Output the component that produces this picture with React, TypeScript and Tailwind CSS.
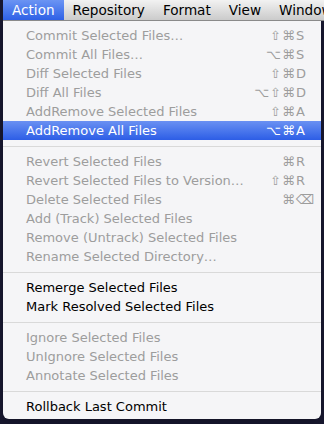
import React from "react";

type Item = {
  label: string;
  mods?: string;
  keyChar?: string;
  enabled?: boolean;
  selected?: boolean;
};

const groups: Item[][] = [
  [
    { label: "Commit Selected Files…", mods: "⇧⌘", keyChar: "S" },
    { label: "Commit All Files…", mods: "⌥⌘", keyChar: "S" },
    { label: "Diff Selected Files", mods: "⇧⌘", keyChar: "D" },
    { label: "Diff All Files", mods: "⌥⇧⌘", keyChar: "D" },
    { label: "AddRemove Selected Files", mods: "⇧⌘", keyChar: "A" },
    { label: "AddRemove All Files", mods: "⌥⌘", keyChar: "A", enabled: true, selected: true },
  ],
  [
    { label: "Revert Selected Files", mods: "⌘", keyChar: "R" },
    { label: "Revert Selected Files to Version…", mods: "⇧⌘", keyChar: "R" },
    { label: "Delete Selected Files", mods: "⌘", keyChar: "⌫" },
    { label: "Add (Track) Selected Files" },
    { label: "Remove (Untrack) Selected Files" },
    { label: "Rename Selected Directory…" },
  ],
  [
    { label: "Remerge Selected Files", enabled: true },
    { label: "Mark Resolved Selected Files", enabled: true },
  ],
  [
    { label: "Ignore Selected Files" },
    { label: "UnIgnore Selected Files" },
    { label: "Annotate Selected Files" },
  ],
  [{ label: "Rollback Last Commit", enabled: true }],
];

const menus = ["Action", "Repository", "Format", "View", "Window"];

function MenuRow({ it }: { it: Item }) {
  const color = it.selected
    ? "text-white bg-gradient-to-b from-[#6a90f2] to-[#2d5de6]"
    : it.enabled
    ? "text-black"
    : "text-[#9d9d9d]";
  return (
    <div className={`flex items-center h-[19px] pl-[23px] pr-[13px] ${color}`}>
      <span className="flex-1 whitespace-nowrap">{it.label}</span>
      {it.keyChar && (
        <span className="flex items-center">
          <span className="tracking-[1px]">{it.mods}</span>
          <span className="w-[12px] text-left">{it.keyChar}</span>
        </span>
      )}
    </div>
  );
}

export default function App() {
  return (
    <div
      className="w-[324px] h-[424px] bg-[#17172e] overflow-hidden"
      style={{ fontFamily: '"DejaVu Sans", "Liberation Sans", sans-serif' }}
    >
      <div className="flex h-[21px] ml-[3px] bg-gradient-to-b from-[#f2f2f2] to-[#cbcbcb] text-[13.6px] text-black border-b border-[#8a8a8a]">
        {menus.map((m, i) => (
          <div
            key={m}
            className={`flex items-center px-[9px] whitespace-nowrap ${
              i === 0
                ? "text-white bg-gradient-to-b from-[#6b94f3] to-[#2e60e6]"
                : ""
            }`}
          >
            {m}
          </div>
        ))}
      </div>
      <div className="ml-[3px] w-[318px] bg-[#f5f5f7] rounded-b-[6px] pt-[5px] pb-[3px] text-[13px] shadow-lg">
        {groups.map((g, gi) => (
          <div key={gi}>
            {gi > 0 && (
              <div className="h-[12px] flex items-center">
                <div className="h-px w-full bg-[#d9d9d9]" />
              </div>
            )}
            {g.map((it) => (
              <MenuRow key={it.label} it={it} />
            ))}
          </div>
        ))}
      </div>
    </div>
  );
}
